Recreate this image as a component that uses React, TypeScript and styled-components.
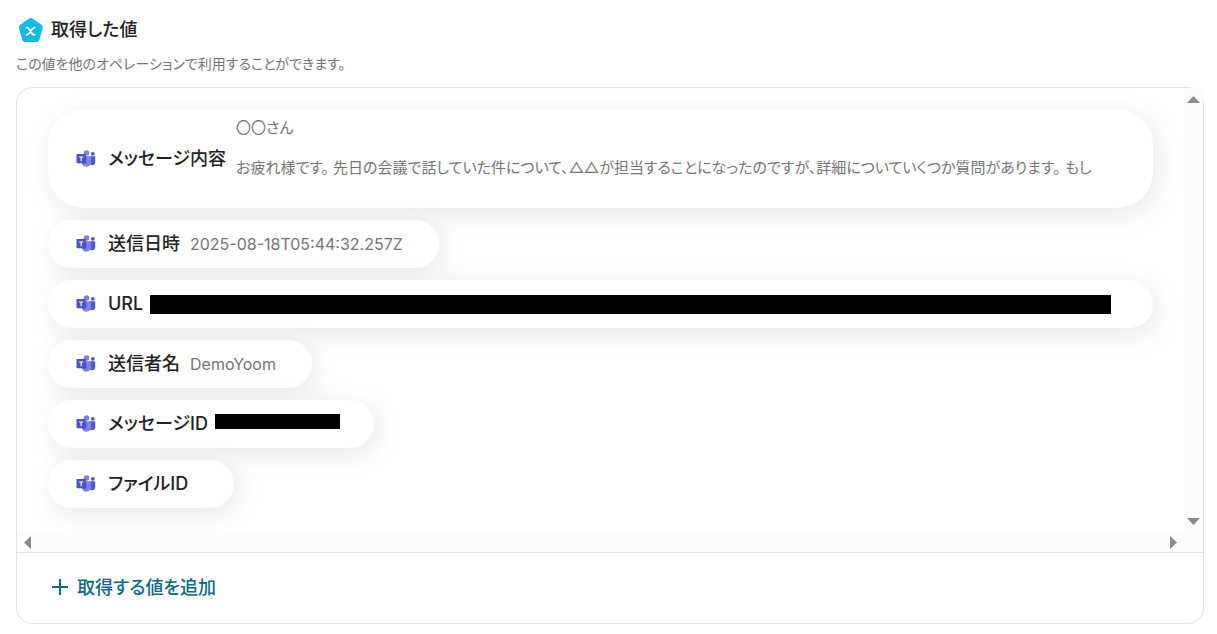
import React from "react";
import styled, { createGlobalStyle } from "styled-components";

const GlobalStyle = createGlobalStyle`
  * { box-sizing: border-box; }
  body {
    margin: 0;
    background: #ffffff;
    color: #222222;
    font-family: Inter, "Noto Sans CJK JP", sans-serif;
    font-feature-settings: "palt";
  }
  h2, p, ul { margin: 0; padding: 0; }
  ul { list-style: none; }
  button { font: inherit; font-feature-settings: inherit; border: 0; background: none; padding: 0; cursor: pointer; }
`;

const Page = styled.main`
  padding: 16px 13px 10px 16px;
`;

const Header = styled.header`
  display: flex;
  align-items: center;
  gap: 6px;
  padding-left: 2px;
  height: 28px;
`;

const Title = styled.h2`
  font-size: 18px;
  line-height: 28px;
  font-weight: 500;
`;

const Description = styled.p`
  margin-top: 10px;
  margin-bottom: 13px;
  font-size: 14px;
  line-height: 20px;
  color: #757575;
`;

const Panel = styled.section`
  border: 1px solid #e4e4e4;
  border-radius: 16px;
`;

const ScrollFrame = styled.div`
  display: grid;
  grid-template-columns: minmax(0, 1fr) 19px;
  grid-template-rows: auto 19px;
  border-bottom: 1px solid #e4e4e4;
`;

const List = styled.ul`
  display: flex;
  flex-direction: column;
  align-items: flex-start;
  gap: 12px;
  padding: 21px 31px 25px;
  overflow: hidden;
  border-top-left-radius: 15px;
`;

const Item = styled.li<{ $wide?: boolean; $tall?: boolean }>`
  display: flex;
  align-items: center;
  width: ${(p) => (p.$wide ? "100%" : "auto")};
  height: ${(p) => (p.$tall ? "99px" : "48px")};
  padding: 0 36px 0 28px;
  border-radius: 36px;
  background: #ffffff;
  box-shadow: 4px 6px 28px rgba(0, 0, 0, 0.09);
`;

const Label = styled.span`
  margin-left: 12px;
  margin-right: 10px;
  flex-shrink: 0;
  font-size: 18px;
  line-height: 24px;
  font-weight: 500;
`;

const Value = styled.span`
  font-size: 16px;
  line-height: 24px;
  color: #757575;
  white-space: nowrap;
`;

const Message = styled.div`
  display: flex;
  flex-direction: column;
  gap: 16px;
  align-self: flex-start;
  min-width: 0;
  flex: 1;
  margin-top: 7px;
  overflow: hidden;
  font-size: 15px;
  line-height: 24px;
  color: #757575;
  white-space: nowrap;
`;

const Redacted = styled.span<{ $fill?: boolean }>`
  flex: ${(p) => (p.$fill ? "1" : "0 0 125px")};
  height: ${(p) => (p.$fill ? "19px" : "15px")};
  margin-left: -3px;
  margin-right: ${(p) => (p.$fill ? "6px" : "-2px")};
  margin-bottom: ${(p) => (p.$fill ? "0" : "5px")};
  background: #000000;
`;

const Track = styled.div<{ $vertical?: boolean }>`
  display: flex;
  flex-direction: ${(p) => (p.$vertical ? "column" : "row")};
  align-items: center;
  justify-content: space-between;
  padding: ${(p) => (p.$vertical ? "8px 0" : "0 7px")};
  background: #fcfcfc;
`;

const Corner = styled.div`
  background: #fcfcfc;
`;

const ArrowButton = styled.button`
  display: flex;
  color: #8b8b8b;
`;

const Footer = styled.footer`
  padding: 22px 34px;
`;

const AddButton = styled.button`
  display: flex;
  align-items: center;
  gap: 8px;
  color: #0b6a84;
  font-size: 18px;
  line-height: 26px;
  font-weight: 500;
`;

const PentagonIcon = () => (
  <svg width="27" height="28" viewBox="0 0 27 28" aria-hidden="true">
    <path
      d="M10.8 2.8a3.4 3.4 0 0 1 4 0l8.6 6a3.2 3.2 0 0 1 1.2 3.6l-3.2 11.3a3 3 0 0 1-2.9 2.3H7.2a3 3 0 0 1-2.9-2.3L1.1 12.4a3.2 3.2 0 0 1 1.2-3.6z"
      fill="#12b9eb"
    />
    <path
      d="M8.600 11.600h.4c.9 0 1.300.3 1.800 1.100l3.500 5c.5.8 1 1.100 1.800 1.100h.6M16.800 11.600c-1.200 0-1.700.4-2.300 1.200l-3.500 4.800c-.7.9-1.200 1.200-2.500 1.200"
      fill="none"
      stroke="#ffffff"
      strokeWidth="1.700"
      strokeLinecap="round"
    />
  </svg>
);

const TeamsIcon = () => (
  <svg width="20" height="20" viewBox="0 0 20 20" aria-hidden="true">
    <circle cx="16.8" cy="4.8" r="1.9" fill="#5059c9" />
    <path d="M13.500 7.300h5a.7.7 0 0 1 .7.700v5.600a2.900 2.900 0 0 1-5.700.500z" fill="#5059c9" />
    <circle cx="10.500" cy="4" r="2.800" fill="#7b83eb" />
    <path d="M6.200 7.300h8.100a.8.800 0 0 1 .8.800v5.700a4.700 4.700 0 0 1-9.200.2V7.600z" fill="#7b83eb" />
    <path d="M6 7.300h4.800v6.800a1 1 0 0 1-1 1H6z" fill="#4048a8" opacity=".4" />
    <rect x=".5" y="4.900" width="9.300" height="9.300" rx=".8" fill="#4b53bc" />
    <path d="M3 7.500h4.300v1.100H5.700v3.700H4.600V8.600H3z" fill="#ffffff" />
  </svg>
);

const PlusIcon = () => (
  <svg width="18" height="18" viewBox="0 0 18 18" aria-hidden="true">
    <path d="M9 0v16M1 8h16" stroke="currentColor" strokeWidth="2" />
  </svg>
);

const arrows = {
  up: { w: 13, h: 7, d: "M0 7 6.500 0 13 7z" },
  down: { w: 13, h: 7, d: "M0 0 6.500 7 13 0z" },
  left: { w: 7, h: 13, d: "M7 0 0 6.500 7 13z" },
  right: { w: 7, h: 13, d: "M0 0 7 6.500 0 13z" },
};

const Arrow = ({ to, label }: { to: keyof typeof arrows; label: string }) => {
  const { w, h, d } = arrows[to];
  return (
    <ArrowButton type="button" aria-label={label}>
      <svg width={w} height={h} viewBox={`0 0 ${w} ${h}`} aria-hidden="true">
        <path d={d} fill="currentColor" />
      </svg>
    </ArrowButton>
  );
};

export default function App() {
  return (
    <>
      <GlobalStyle />
      <Page>
        <Header>
          <PentagonIcon />
          <Title>取得した値</Title>
        </Header>
        <Description>この値を他のオペレーションで利用することができます。</Description>
        <Panel>
          <ScrollFrame>
            <List>
              <Item $wide $tall>
                <TeamsIcon />
                <Label>メッセージ内容</Label>
                <Message>
                  <p>〇〇さん</p>
                  <p>
                    お疲れ様です。 先日の会議で話していた件について、△△が担当することになったのですが、詳細についていくつか質問があります。 もし
                  </p>
                </Message>
              </Item>
              <Item>
                <TeamsIcon />
                <Label>送信日時</Label>
                <Value>2025-08-18T05:44:32.257Z</Value>
              </Item>
              <Item $wide>
                <TeamsIcon />
                <Label>URL</Label>
                <Redacted $fill />
              </Item>
              <Item>
                <TeamsIcon />
                <Label>送信者名</Label>
                <Value>DemoYoom</Value>
              </Item>
              <Item>
                <TeamsIcon />
                <Label>メッセージID</Label>
                <Redacted />
              </Item>
              <Item>
                <TeamsIcon />
                <Label>ファイルID</Label>
              </Item>
            </List>
            <Track $vertical>
              <Arrow to="up" label="上へスクロール" />
              <Arrow to="down" label="下へスクロール" />
            </Track>
            <Track>
              <Arrow to="left" label="左へスクロール" />
              <Arrow to="right" label="右へスクロール" />
            </Track>
            <Corner />
          </ScrollFrame>
          <Footer>
            <AddButton type="button">
              <PlusIcon />
              取得する値を追加
            </AddButton>
          </Footer>
        </Panel>
      </Page>
    </>
  );
}
